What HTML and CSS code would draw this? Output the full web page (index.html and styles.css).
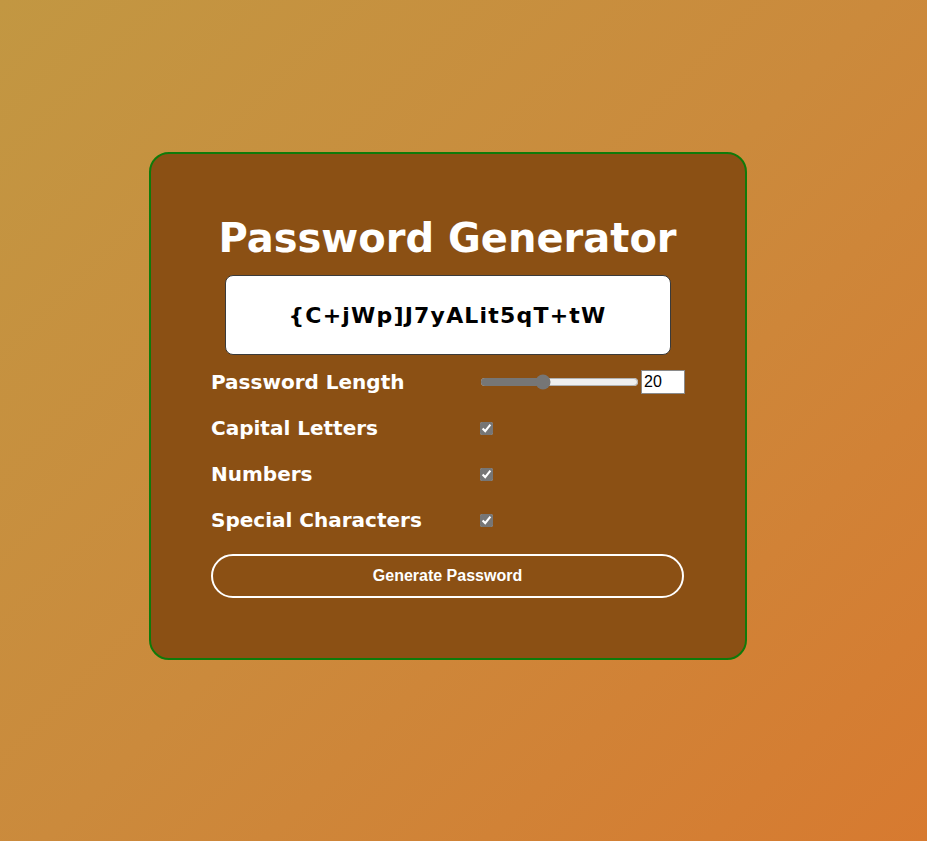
FILE: index.html
```html
<!DOCTYPE html>
<html lang="en">
<head>
<meta charset="utf-8">
<title>Password Generator</title>
<link rel="stylesheet" href="styles.css">
</head>
<body>
<main class="page">
  <section class="card">
    <h1 class="title">Password Generator</h1>
    <div class="output">{C+jWp]J7yALit5qT+tW</div>
    <div class="row">
      <label class="label" for="len">Password Length</label>
      <div class="control">
        <input class="range" id="len" type="range" min="1" max="50" value="20">
        <input class="num" type="number" value="20">
      </div>
    </div>
    <div class="row">
      <label class="label" for="cap">Capital Letters</label>
      <div class="control"><input class="check" id="cap" type="checkbox" checked></div>
    </div>
    <div class="row">
      <label class="label" for="numb">Numbers</label>
      <div class="control"><input class="check" id="numb" type="checkbox" checked></div>
    </div>
    <div class="row">
      <label class="label" for="spec">Special Characters</label>
      <div class="control"><input class="check" id="spec" type="checkbox" checked></div>
    </div>
    <button class="btn" type="button">Generate Password</button>
  </section>
</main>
</body>
</html>
```
FILE: styles.css
```css
html, body {
  margin: 0;
  height: 100%;
}
body {
  background: linear-gradient(135deg, #c29742 0%, #cb8a3c 50%, #d77a30 100%);
  font-family: "DejaVu Sans", Verdana, sans-serif;
}
.page {
  min-height: 100%;
  box-sizing: border-box;
  padding: 152px 0 0 149px;
}
.card {
  width: 598px;
  box-sizing: border-box;
  background: #8b5014;
  border: 2px solid #0f7a0a;
  border-radius: 20px;
  padding: 61px 61px 60px 60px;
  display: flex;
  flex-direction: column;
}
.title {
  margin: 0 0 14px;
  text-align: center;
  font-size: 40px;
  font-weight: bold;
  line-height: 46px;
  color: #fff;
}
.output {
  align-self: center;
  width: 446px;
  height: 80px;
  box-sizing: border-box;
  background: #fff;
  border: 1px solid #3a3a3a;
  border-radius: 8px;
  display: flex;
  align-items: center;
  justify-content: center;
  font-size: 22px;
  font-weight: bold;
  letter-spacing: 1.2px;
  color: #000;
  margin-bottom: 4px;
}
.row {
  height: 46px;
  display: flex;
  align-items: center;
}
.label {
  width: 269px;
  flex: none;
  font-size: 20px;
  font-weight: bold;
  color: #fff;
}
.control {
  display: flex;
  align-items: center;
  gap: 2px;
}
.range {
  width: 159px;
  margin: 0;
  accent-color: #767676;
}
.num {
  width: 44px;
  height: 24px;
  box-sizing: border-box;
  margin: 0;
  padding: 1px 2px;
  border: 1px solid #8a8a8a;
  font-family: "Liberation Sans", Arial, sans-serif;
  font-size: 16px;
}
.check {
  width: 13px;
  height: 13px;
  margin: 0;
  accent-color: #767676;
}
.btn {
  margin-top: 11px;
  height: 44px;
  background: transparent;
  border: 2px solid #fff;
  border-radius: 22px;
  color: #fff;
  font-family: "Liberation Sans", Arial, sans-serif;
  font-size: 16px;
  font-weight: bold;
  cursor: pointer;
}
```
